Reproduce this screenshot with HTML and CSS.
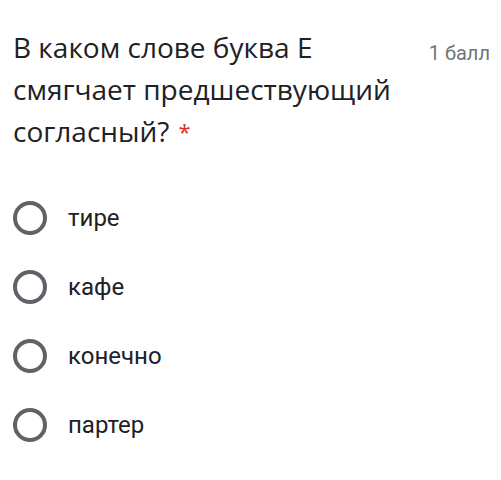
FILE: index.html
```html
<!DOCTYPE html>
<html lang="ru">
<head>
<meta charset="utf-8">
<link rel="stylesheet" href="styles.css">
</head>
<body>
<div class="card">
  <div class="header">
    <div class="title">В каком слове буква Е смягчает предшествующий согласный?<span class="req">*</span></div>
    <div class="points">1 балл</div>
  </div>
  <div class="options">
    <div class="option"><span class="radio"></span><span class="label">тире</span></div>
    <div class="option"><span class="radio"></span><span class="label">кафе</span></div>
    <div class="option"><span class="radio"></span><span class="label">конечно</span></div>
    <div class="option"><span class="radio"></span><span class="label">партер</span></div>
  </div>
</div>
</body>
</html>
```
FILE: styles.css
```css
html, body { margin: 0; padding: 0; background: #fff; }
.card { padding: 26px 11px 0 13px; }
.header { display: flex; justify-content: space-between; align-items: flex-start; }
.title {
  font-family: "Open Sans", "Noto Sans", sans-serif;
  font-size: 28px;
  line-height: 42px;
  color: #202124;
  width: 390px;
}
.req {
  color: #d93025;
  font-size: 22px;
  margin-left: 9px;
  vertical-align: 2px;
}
.points {
  font-family: Roboto, sans-serif;
  font-size: 20px;
  color: #70757a;
  line-height: 22px;
  margin-top: 16px;
}
.options { display: flex; flex-direction: column; gap: 35px; margin-top: 49px; }
.option { display: flex; align-items: center; height: 34px; }
.radio {
  width: 26px; height: 26px;
  border: 4px solid #5f6368;
  border-radius: 50%;
  box-sizing: content-box;
  flex: none;
}
.label {
  font-family: Roboto, sans-serif;
  font-size: 24px;
  color: #202124;
  margin-left: 21px;
}
```
